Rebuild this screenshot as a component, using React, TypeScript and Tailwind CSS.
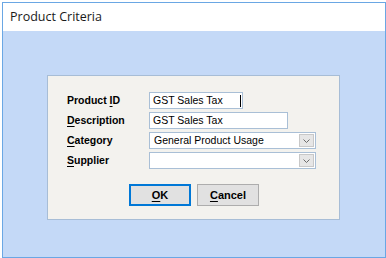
const ui = '"Liberation Sans", Arial, sans-serif'

function Chevron() {
  return (
    <svg width="9" height="6" viewBox="0 0 9 6" className="text-[#6b6b6b]">
      <path d="M1.5 1.5 L4.5 4.5 L7.5 1.5" fill="none" stroke="currentColor" strokeWidth="1" />
    </svg>
  )
}

function Field({ value, width, cursor }: { value: string; width: string; cursor?: boolean }) {
  return (
    <div className={`flex h-[17px] ${width} items-center border border-[#a9bfd6] bg-white pl-[3px] text-[10.5px] text-black`}>
      <span className="flex-1 leading-none">{value}</span>
      {cursor && <span className="mr-[1px] h-[12px] w-px bg-black" />}
    </div>
  )
}

function Combo({ value }: { value: string }) {
  return (
    <div className="flex h-[17px] w-[167px] items-center border border-[#a9bfd6] bg-white pl-[4px] text-[10.5px] text-black">
      <span className="flex-1 leading-none">{value}</span>
      <div className="mr-px flex h-[13px] w-[15px] items-center justify-center border border-[#c8c8c8] bg-[#e6e6e6]">
        <Chevron />
      </div>
    </div>
  )
}

export default function App() {
  const rows = [
    { pre: 'Product ', key: 'I', post: 'D', field: <Field value="GST Sales Tax" width="w-[94px]" cursor /> },
    { pre: '', key: 'D', post: 'escription', field: <Field value="GST Sales Tax" width="w-[139px]" /> },
    { pre: '', key: 'C', post: 'ategory', field: <Combo value="General Product Usage" /> },
    { pre: '', key: 'S', post: 'upplier', field: <Combo value="" /> },
  ]

  return (
    <div className="h-[258px] w-[386px] bg-white p-[2px]" style={{ fontFamily: ui }}>
      <div className="flex h-[256px] w-[384px] flex-col border border-[#6aa7e4]">
        <div
          className="flex h-[28px] items-center pl-[7px] text-[12.5px] text-[#1a1a1a]"
          style={{ fontFamily: '"Open Sans", "Noto Sans", sans-serif' }}
        >
          Product Criteria
        </div>
        <div className="flex-1 bg-[#c4d9f7] pl-[44px] pt-[44px]">
          <div className="flex h-[145px] w-[293px] flex-col border border-[#a7bdd6] bg-[#f3f2ee] pl-[19px] pt-[16px]">
            <div className="grid grid-cols-[82px_auto] gap-y-[3px]">
              {rows.map((r, i) => (
                <div key={i} className="contents">
                  <div className="flex h-[17px] items-center pt-px text-[10.5px] font-bold text-black">
                    <span>
                      {r.pre}
                      <span className="underline underline-offset-2">{r.key}</span>
                      {r.post}
                    </span>
                  </div>
                  {r.field}
                </div>
              ))}
            </div>
            <div className="mt-[15px] flex gap-[6px] pl-[62px]">
              <button className="h-[22px] w-[62px] border-2 border-[#0078d7] bg-[#e1e1e1] text-[11px] font-bold text-black">
                <span className="underline underline-offset-2">O</span>K
              </button>
              <button className="h-[22px] w-[62px] border border-[#adadad] bg-[#e1e1e1] text-[11px] font-bold text-black">
                <span className="underline underline-offset-2">C</span>ancel
              </button>
            </div>
          </div>
        </div>
      </div>
    </div>
  )
}
